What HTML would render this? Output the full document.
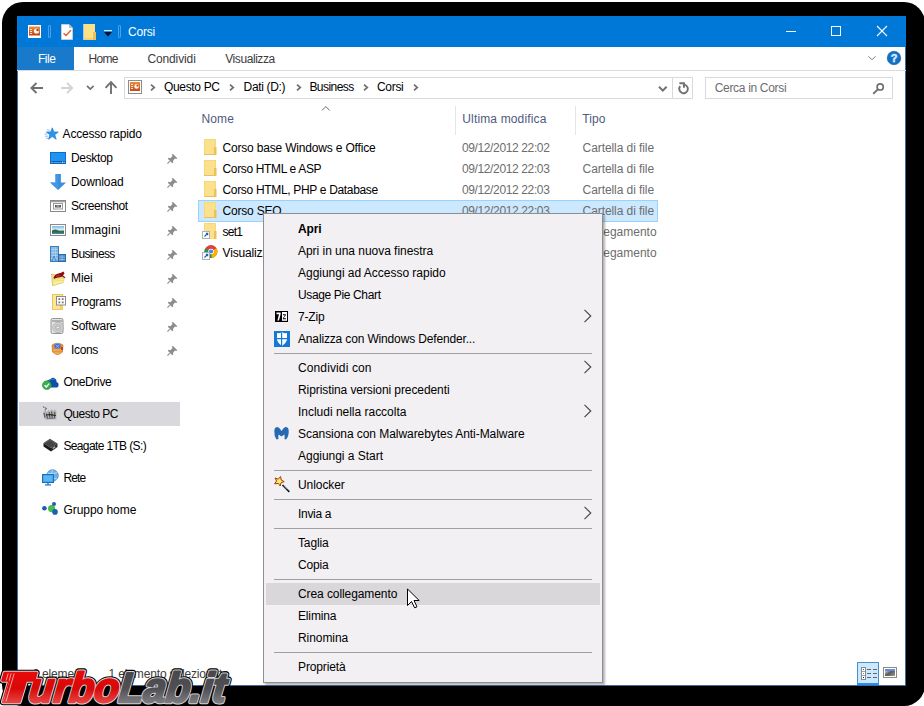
<!DOCTYPE html><html><head><meta charset="utf-8"><style>
html,body{margin:0;padding:0;}
body{width:924px;height:706px;position:relative;overflow:hidden;background:#fff;font-family:"Liberation Sans",sans-serif;}
.t{position:absolute;white-space:pre;}
.r{position:absolute;}
svg.r{overflow:visible}
</style></head><body>
<div class="r" style="left:2px;top:2px;width:923px;height:704px;background:#000;border-radius:21px"></div>
<div class="r" style="left:17px;top:16px;width:889px;height:670px;background:#fff;box-sizing:border-box;border:1px solid #3d6d9d"></div>
<div class="r" style="left:17px;top:16px;width:889px;height:31px;background:#0078d7;"></div>
<svg class="r" style="left:27.5px;top:24.5px" width="13" height="13" viewBox="0 0 13 13"><defs><linearGradient id="og1" x1="0" y1="0" x2="0" y2="1"><stop offset="0" stop-color="#f09040"/><stop offset="1" stop-color="#b8441a"/></linearGradient></defs><rect x="0" y="0" width="13" height="13" fill="#fff"/><rect x="1" y="1.5" width="11" height="9" fill="url(#og1)"/><rect x="2" y="4" width="2" height="1" fill="#fde6c8"/><rect x="2" y="6" width="2" height="1" fill="#fde6c8"/><rect x="2" y="8" width="2" height="1" fill="#fde6c8"/><circle cx="8.5" cy="6" r="2.6" fill="#fff4e0"/><path d="M8.5 6 L8.5 3.8 A2.2 2.2 0 0 1 10.7 6.2 Z" fill="#a0401a"/></svg>
<div class="r" style="left:48px;top:25px;width:3px;height:13px;background:transparent;box-sizing:border-box;border:1px solid #4aa0ec;border-radius:1px"></div>
<div class="r" style="left:118px;top:25px;width:3px;height:13px;background:transparent;box-sizing:border-box;border:1px solid #4aa0ec;border-radius:1px"></div>
<svg class="r" style="left:61px;top:24px" width="12" height="16" viewBox="0 0 12 16"><path d="M0.5 0.5 H8 L11.5 4 V15.5 H0.5 Z" fill="#fff" stroke="#c8ccd4" stroke-width="1"/><path d="M8 0.5 V4 H11.5 Z" fill="#b8bcc4"/><path d="M2.6 9.2 L5 11.6 L10 6.3" fill="none" stroke="#e0602a" stroke-width="1.4"/></svg>
<svg class="r" style="left:83px;top:24px" width="13" height="16" viewBox="0 0 13 16"><rect x="0" y="0" width="12" height="16" fill="#9ccbe9"/><rect x="1" y="0" width="11" height="16" fill="#fbe08a"/><rect x="10" y="8" width="3" height="8" fill="#e9c15c"/><rect x="1" y="14" width="9" height="2" fill="#f3cf6e"/></svg>
<svg class="r" style="left:104px;top:30px" width="8" height="7" viewBox="0 0 8 7"><rect x="0" y="0" width="8" height="1.2" fill="#d8e8f8"/><path d="M0 2 H8 L4 6.5 Z" fill="#0a1030"/></svg>
<div class="r" style="left:786px;top:31px;width:10px;height:1px;background:#fff;"></div>
<div class="r" style="left:831px;top:26px;width:10px;height:10px;background:transparent;box-sizing:border-box;border:1px solid #fff"></div>
<svg class="r" style="left:877px;top:26px" width="10" height="10" viewBox="0 0 10 10"><path d="M0 0 L10 10 M10 0 L0 10" stroke="#fff" stroke-width="1.1"/></svg>
<svg class="r" style="left:868px;top:56px" width="8" height="4" viewBox="0 0 8 4"><path d="M0.3 0.3 L4 3.7 L7.7 0.3" fill="none" stroke="#808080" stroke-width="1"/></svg>
<svg class="r" style="left:887px;top:51px" width="14" height="14" viewBox="0 0 14 14"><circle cx="7" cy="7" r="6.8" fill="#1370c8" stroke="#0d4f90" stroke-width="0.5"/><text x="7" y="11.2" text-anchor="middle" font-family="Liberation Sans" font-weight="bold" font-size="11" fill="#d8ecff" stroke="#d8ecff" stroke-width="0.5">?</text></svg>
<svg class="r" style="left:30px;top:82px" width="14" height="12" viewBox="0 0 14 12"><path d="M6.5 1 L1.4 6 L6.5 11 M1.4 6 H13" fill="none" stroke="#707070" stroke-width="1.9"/></svg>
<svg class="r" style="left:60px;top:82px" width="14" height="12" viewBox="0 0 14 12"><path d="M7 1 L12.1 6 L7 11 M12.1 6 H1" fill="none" stroke="#d4d4d4" stroke-width="1.9"/></svg>
<svg class="r" style="left:86px;top:85px" width="9" height="5" viewBox="0 0 9 5"><path d="M1 0.8 L4.3 4 L7.6 0.8" fill="none" stroke="#707070" stroke-width="1.7"/></svg>
<svg class="r" style="left:104px;top:81px" width="14" height="13" viewBox="0 0 14 13"><path d="M1.5 6.8 L7 1.2 L12.5 6.8 M7 1.2 V13" fill="none" stroke="#707070" stroke-width="1.9"/></svg>
<svg class="r" style="left:128px;top:80px" width="14" height="14" viewBox="0 0 14 14"><rect x="0.5" y="0.5" width="13" height="13" fill="#fff" stroke="#8c8c8c" stroke-width="1"/><defs><linearGradient id="og2" x1="0" y1="0" x2="0" y2="1"><stop offset="0" stop-color="#f08a3c"/><stop offset="1" stop-color="#c04a18"/></linearGradient></defs><rect x="2" y="2" width="10" height="9" fill="url(#og2)"/><rect x="3" y="4" width="2" height="1" fill="#fde6c8"/><rect x="3" y="6" width="2" height="1" fill="#fde6c8"/><rect x="3" y="8" width="2" height="1" fill="#fde6c8"/><circle cx="8.6" cy="6.4" r="2.3" fill="#fff4e0"/><path d="M8.6 6.4 L8.6 4.4 A2 2 0 0 1 10.5 6.6 Z" fill="#a0401a"/></svg>
<svg class="r" style="left:150px;top:84px" width="6" height="7" viewBox="0 0 6 7"><path d="M1 0.7 L4.3 3.5 L1 6.3" fill="none" stroke="#707070" stroke-width="1.7"/></svg>
<svg class="r" style="left:229px;top:84px" width="6" height="7" viewBox="0 0 6 7"><path d="M1 0.7 L4.3 3.5 L1 6.3" fill="none" stroke="#707070" stroke-width="1.7"/></svg>
<svg class="r" style="left:295.5px;top:84px" width="6" height="7" viewBox="0 0 6 7"><path d="M1 0.7 L4.3 3.5 L1 6.3" fill="none" stroke="#707070" stroke-width="1.7"/></svg>
<svg class="r" style="left:363px;top:84px" width="6" height="7" viewBox="0 0 6 7"><path d="M1 0.7 L4.3 3.5 L1 6.3" fill="none" stroke="#707070" stroke-width="1.7"/></svg>
<svg class="r" style="left:413px;top:84px" width="6" height="7" viewBox="0 0 6 7"><path d="M1 0.7 L4.3 3.5 L1 6.3" fill="none" stroke="#707070" stroke-width="1.7"/></svg>
<svg class="r" style="left:658px;top:86px" width="10" height="6" viewBox="0 0 10 6"><path d="M1 0.8 L4.8 4.6 L8.6 0.8" fill="none" stroke="#707070" stroke-width="2"/></svg>
<svg class="r" style="left:677px;top:82px" width="12" height="12" viewBox="0 0 12 12"><path d="M3.2 4.2 A4.3 4.3 0 1 0 6.6 2.6" fill="none" stroke="#707070" stroke-width="1.9"/><path d="M2.4 1.3 H6.9 V5.8" fill="none" stroke="#707070" stroke-width="1.9"/></svg>
<svg class="r" style="left:872px;top:82px" width="13" height="13" viewBox="0 0 13 13"><circle cx="8.2" cy="4.9" r="3.1" fill="none" stroke="#707070" stroke-width="1.7"/><path d="M5.8 7.4 L1.3 11.8" stroke="#707070" stroke-width="1.9"/></svg>
<svg class="r" style="left:321px;top:105px" width="10" height="7" viewBox="0 0 10 7"><path d="M1 5.5 L4.8 1.5 L8.6 5.5" fill="none" stroke="#707070" stroke-width="1"/></svg>
<div class="r" style="left:17px;top:47px;width:57px;height:23px;background:#1979ca;"></div>
<div class="t" style="left:38.00px;top:53.00px;font-size:12px;line-height:12px;color:#fff;font-weight:normal;letter-spacing:-0.509px">File</div>
<div class="t" style="left:88.60px;top:53.00px;font-size:12px;line-height:12px;color:#3c3c3c;font-weight:normal;letter-spacing:-0.753px">Home</div>
<div class="t" style="left:147.40px;top:53.00px;font-size:12px;line-height:12px;color:#3c3c3c;font-weight:normal;letter-spacing:-0.118px">Condividi</div>
<div class="t" style="left:225.20px;top:53.00px;font-size:12px;line-height:12px;color:#3c3c3c;font-weight:normal;letter-spacing:-0.421px">Visualizza</div>
<div class="r" style="left:17px;top:70px;width:889px;height:1px;background:#dadbdc;"></div>
<div class="t" style="left:128.00px;top:26.00px;font-size:12px;line-height:12px;color:#fff;font-weight:normal;letter-spacing:-0.201px">Corsi</div>
<div class="r" style="left:124px;top:77px;width:569px;height:22px;background:transparent;box-sizing:border-box;border:1px solid #d9d9d9"></div>
<div class="r" style="left:672px;top:78px;width:1px;height:20px;background:#d9d9d9;"></div>
<div class="t" style="left:164.00px;top:81.00px;font-size:12px;line-height:12px;color:#000;font-weight:normal;letter-spacing:-0.333px">Questo PC</div>
<div class="t" style="left:243.60px;top:81.00px;font-size:12px;line-height:12px;color:#000;font-weight:normal;letter-spacing:-0.330px">Dati (D:)</div>
<div class="t" style="left:309.40px;top:81.00px;font-size:12px;line-height:12px;color:#000;font-weight:normal;letter-spacing:-0.537px">Business</div>
<div class="t" style="left:376.90px;top:81.00px;font-size:12px;line-height:12px;color:#000;font-weight:normal;letter-spacing:-0.281px">Corsi</div>
<div class="r" style="left:705px;top:77px;width:188px;height:22px;background:transparent;box-sizing:border-box;border:1px solid #d9d9d9"></div>
<div class="t" style="left:714.70px;top:82.00px;font-size:12px;line-height:12px;color:#6d6d6d;font-weight:normal;letter-spacing:-0.316px">Cerca in Corsi</div>
<div class="t" style="left:201.40px;top:113.00px;font-size:12px;line-height:12px;color:#4f5a7e;font-weight:normal;letter-spacing:0.197px">Nome</div>
<div class="r" style="left:455px;top:106px;width:1px;height:29px;background:#e5e5e5;"></div>
<div class="t" style="left:462.30px;top:113.00px;font-size:12px;line-height:12px;color:#4f5a7e;font-weight:normal;letter-spacing:0.145px">Ultima modifica</div>
<div class="r" style="left:575px;top:106px;width:1px;height:29px;background:#e5e5e5;"></div>
<div class="t" style="left:582.20px;top:113.00px;font-size:12px;line-height:12px;color:#4f5a7e;font-weight:normal;letter-spacing:0.125px">Tipo</div>
<div class="r" style="left:198px;top:200px;width:460px;height:22px;background:#cce8ff;box-sizing:border-box;border:1px solid #99d1ff"></div>
<div class="t" style="left:222.50px;top:142.00px;font-size:12px;line-height:12px;color:#000;font-weight:normal;letter-spacing:-0.180px">Corso base Windows e Office</div>
<div class="t" style="left:461.90px;top:142.00px;font-size:12px;line-height:12px;color:#6d6d6d;font-weight:normal;letter-spacing:-0.364px">09/12/2012 22:02</div>
<div class="t" style="left:582.60px;top:142.00px;font-size:12px;line-height:12px;color:#6d6d6d;font-weight:normal;letter-spacing:-0.081px">Cartella di file</div>
<div class="t" style="left:222.50px;top:163.00px;font-size:12px;line-height:12px;color:#000;font-weight:normal;letter-spacing:-0.347px">Corso HTML e ASP</div>
<div class="t" style="left:461.90px;top:163.00px;font-size:12px;line-height:12px;color:#6d6d6d;font-weight:normal;letter-spacing:-0.364px">09/12/2012 22:03</div>
<div class="t" style="left:582.60px;top:163.00px;font-size:12px;line-height:12px;color:#6d6d6d;font-weight:normal;letter-spacing:-0.081px">Cartella di file</div>
<div class="t" style="left:222.50px;top:184.00px;font-size:12px;line-height:12px;color:#000;font-weight:normal;letter-spacing:-0.325px">Corso HTML, PHP e Database</div>
<div class="t" style="left:461.90px;top:184.00px;font-size:12px;line-height:12px;color:#6d6d6d;font-weight:normal;letter-spacing:-0.364px">09/12/2012 22:03</div>
<div class="t" style="left:582.60px;top:184.00px;font-size:12px;line-height:12px;color:#6d6d6d;font-weight:normal;letter-spacing:-0.081px">Cartella di file</div>
<div class="t" style="left:222.50px;top:205.00px;font-size:12px;line-height:12px;color:#000;font-weight:normal;letter-spacing:-0.202px">Corso SEO</div>
<div class="t" style="left:461.90px;top:205.00px;font-size:12px;line-height:12px;color:#6d6d6d;font-weight:normal;letter-spacing:-0.364px">09/12/2012 22:03</div>
<div class="t" style="left:582.60px;top:205.00px;font-size:12px;line-height:12px;color:#6d6d6d;font-weight:normal;letter-spacing:-0.081px">Cartella di file</div>
<div class="t" style="left:222.50px;top:226.00px;font-size:12px;line-height:12px;color:#000;font-weight:normal;letter-spacing:-0.745px">set1</div>
<div class="t" style="left:582.60px;top:226.00px;font-size:12px;line-height:12px;color:#6d6d6d;font-weight:normal;letter-spacing:-0.004px">Collegamento</div>
<div class="t" style="left:222.50px;top:247.00px;font-size:12px;line-height:12px;color:#000;font-weight:normal;letter-spacing:-0.162px">Visualizza collegamenti</div>
<div class="t" style="left:582.60px;top:247.00px;font-size:12px;line-height:12px;color:#6d6d6d;font-weight:normal;letter-spacing:-0.004px">Collegamento</div>
<div class="r" style="left:19px;top:402px;width:161px;height:24px;background:#d9d8dd;"></div>
<div class="t" style="left:62.60px;top:128.00px;font-size:12px;line-height:12px;color:#000;font-weight:normal;letter-spacing:-0.218px">Accesso rapido</div>
<div class="t" style="left:71.00px;top:152.00px;font-size:12px;line-height:12px;color:#000;font-weight:normal;letter-spacing:-0.346px">Desktop</div>
<div class="t" style="left:71.00px;top:176.00px;font-size:12px;line-height:12px;color:#000;font-weight:normal;letter-spacing:-0.096px">Download</div>
<div class="t" style="left:71.00px;top:200.00px;font-size:12px;line-height:12px;color:#000;font-weight:normal;letter-spacing:-0.410px">Screenshot</div>
<div class="t" style="left:71.00px;top:224.00px;font-size:12px;line-height:12px;color:#000;font-weight:normal;letter-spacing:0.090px">Immagini</div>
<div class="t" style="left:71.00px;top:248.00px;font-size:12px;line-height:12px;color:#000;font-weight:normal;letter-spacing:-0.624px">Business</div>
<div class="t" style="left:71.00px;top:272.00px;font-size:12px;line-height:12px;color:#000;font-weight:normal;letter-spacing:-0.101px">Miei</div>
<div class="t" style="left:71.00px;top:296.00px;font-size:12px;line-height:12px;color:#000;font-weight:normal;letter-spacing:-0.265px">Programs</div>
<div class="t" style="left:71.00px;top:320.00px;font-size:12px;line-height:12px;color:#000;font-weight:normal;letter-spacing:-0.295px">Software</div>
<div class="t" style="left:71.00px;top:344.00px;font-size:12px;line-height:12px;color:#000;font-weight:normal;letter-spacing:-0.336px">Icons</div>
<div class="t" style="left:63.40px;top:376.00px;font-size:12px;line-height:12px;color:#000;font-weight:normal;letter-spacing:-0.336px">OneDrive</div>
<div class="t" style="left:63.40px;top:408.00px;font-size:12px;line-height:12px;color:#000;font-weight:normal;letter-spacing:-0.455px">Questo PC</div>
<div class="t" style="left:63.40px;top:440.00px;font-size:12px;line-height:12px;color:#000;font-weight:normal;letter-spacing:-0.632px">Seagate 1TB (S:)</div>
<div class="t" style="left:63.40px;top:472.00px;font-size:12px;line-height:12px;color:#000;font-weight:normal;letter-spacing:-0.862px">Rete</div>
<div class="t" style="left:63.40px;top:504.00px;font-size:12px;line-height:12px;color:#000;font-weight:normal;letter-spacing:-0.044px">Gruppo home</div>
<div class="t" style="left:32.40px;top:668.00px;font-size:12px;line-height:12px;color:#3c3c3c;font-weight:normal;letter-spacing:-0.166px">6 elementi</div>
<div class="t" style="left:108.60px;top:668.00px;font-size:12px;line-height:12px;color:#3c3c3c;font-weight:normal;letter-spacing:-0.155px">1 elemento selezionato</div>
<svg class="r" style="left:44px;top:127px" width="15" height="14" viewBox="0 0 15 14"><path d="M8.3 0.8 L9.9 4.9 L14.3 5.0 L10.8 7.7 L12.2 12.3 L8.3 9.6 L4.5 12.3 L5.8 7.7 L2.3 5.0 L6.7 4.9 Z" fill="#2f94e6" stroke="#1a74c8" stroke-width="0.6"/><path d="M0.5 7 H3.2 M1 9.2 H4 M2 11.3 H4.5 M3 2.8 L5.5 3.3" stroke="#7ab8ee" stroke-width="0.9"/></svg>
<svg class="r" style="left:50px;top:152px" width="16" height="12" viewBox="0 0 16 12"><rect x="0.5" y="0.5" width="15" height="11" fill="#1f95ef" stroke="#0c6fcf"/><rect x="1" y="9" width="14" height="2.5" fill="#0a5fb0"/><rect x="1.5" y="9.8" width="1" height="1" fill="#fff"/><rect x="12" y="9.8" width="1" height="1" fill="#fff"/><rect x="13.6" y="9.8" width="1" height="1" fill="#fff"/><rect x="3.5" y="10" width="8" height="0.6" fill="#8cc4f0"/></svg>
<svg class="r" style="left:50px;top:174px" width="16" height="16" viewBox="0 0 16 16"><path d="M5.4 0 H10.9 V8.6 H16 L8.15 16 L0 8.6 H5.4 Z" fill="#3b8fe0"/><path d="M5.4 0 H8.15 V16 L0 8.6 H5.4 Z" fill="#4a9be6" opacity="0.6"/></svg>
<svg class="r" style="left:50px;top:200px" width="16" height="12" viewBox="0 0 16 12"><rect x="0.5" y="0.5" width="15" height="11" fill="#fff" stroke="#8a8a8a"/><rect x="1" y="1" width="14" height="1.3" fill="#a0a0a0"/><rect x="3.5" y="3.5" width="9" height="5.5" fill="#fff" stroke="#9a9a9a"/><rect x="5" y="5" width="6" height="2.5" fill="#5a5a5a"/><rect x="6.5" y="5.5" width="3" height="1" fill="#c8c8c8"/></svg>
<svg class="r" style="left:50px;top:224px" width="16" height="12" viewBox="0 0 16 12"><defs><linearGradient id="sky" x1="0" y1="0" x2="0" y2="1"><stop offset="0" stop-color="#7ab8e8"/><stop offset="0.45" stop-color="#d8ecf8"/><stop offset="0.7" stop-color="#3e7a50"/><stop offset="1" stop-color="#4a86b8"/></linearGradient></defs><rect x="0.5" y="0.5" width="15" height="11" fill="#fff" stroke="#8a8a8a"/><rect x="2" y="2" width="12" height="8" fill="url(#sky)"/><path d="M2 7 Q5 4.5 8 6.5 T14 6.8 V8.5 H2 Z" fill="#2e6a48"/></svg>
<svg class="r" style="left:50px;top:246px" width="16" height="16" viewBox="0 0 16 16"><rect x="0.5" y="0.5" width="8" height="15" fill="#7db4e2" stroke="#3a7ec0"/><path d="M1 3.5 H8 M1 6.5 H8 M1 9.5 H8 M1 12.5 H8 M3 1 V15 M5.5 1 V15" stroke="#b8daf4" stroke-width="0.6"/><rect x="8.5" y="8.5" width="7" height="7" fill="#4d8ac8" stroke="#2e6aa8"/><path d="M9 11 H15 M9 13.5 H15 M12 9 V15" stroke="#a8d0f0" stroke-width="0.6"/><path d="M2 15 L4 10 L6 15" fill="none" stroke="#3c78b0" stroke-width="0.8"/></svg>
<svg class="r" style="left:51px;top:271px" width="16" height="16" viewBox="0 0 16 16"><path d="M0.5 3 L1.5 14.5 L12 11.5 L12.5 6 Z" fill="#f2e488" stroke="#b8a860" stroke-width="0.6"/><path d="M2 8.5 L13.5 7 L12 11.8 L1.5 14.5 Z" fill="#f8ee9a" stroke="#d8c860" stroke-width="0.5"/><path d="M3.5 10 Q8 9 12 9.5" stroke="#e8e070" stroke-width="0.8" fill="none"/><path d="M2.5 6.5 Q4 3 7.5 2.5 Q10 2.2 12.5 0.5 L13.5 2.5 Q12.5 3.5 12 4.5 L14.5 6.2 L13.5 7 L11.5 5.5 Q9 6.5 6 6.8 Q4 7 3.2 8 Z" fill="#8e0c0c"/><path d="M5 5.5 Q7 4.5 9 4.6" stroke="#e06060" stroke-width="0.6" fill="none"/></svg>
<svg class="r" style="left:52px;top:294px" width="14" height="16" viewBox="0 0 14 16"><rect x="0.5" y="0.5" width="10" height="15" fill="#fbe49c" stroke="#f0c850"/><rect x="8" y="8" width="3" height="7.5" fill="#f2cf62"/><rect x="4.5" y="2.5" width="9" height="8.5" fill="#fff" stroke="#8c8c8c"/><rect x="6.4" y="4.2" width="1.8" height="1.8" fill="#7a7a7a"/><rect x="9.8" y="4.2" width="1.8" height="1.8" fill="#7a7a7a"/><rect x="6.4" y="7.5" width="1.8" height="1.8" fill="#7a7a7a"/><rect x="9.8" y="7.5" width="1.8" height="1.8" fill="#7a7a7a"/></svg>
<svg class="r" style="left:50px;top:318px" width="16" height="16" viewBox="0 0 16 16"><defs><radialGradient id="disc" cx="0.5" cy="0.5" r="0.5"><stop offset="0" stop-color="#fff"/><stop offset="0.5" stop-color="#b8b8b8"/><stop offset="1" stop-color="#e8e8e8"/></radialGradient></defs><path d="M1 2 Q1 0.5 2.5 0.5 H11.5 Q13 0.5 13 2 V14 Q13 15.5 11.5 15.5 H2.5 Q1 15.5 1 14 Z" fill="#e4e4e4" stroke="#8a8a8a" stroke-width="0.9"/><rect x="2" y="2" width="10" height="2" fill="#b0b0b0"/><circle cx="8" cy="9.5" r="5.2" fill="url(#disc)" stroke="#9a9a9a" stroke-width="0.7"/><circle cx="8" cy="9.5" r="1.2" fill="#fff" stroke="#888" stroke-width="0.5"/></svg>
<svg class="r" style="left:51px;top:342px" width="13" height="14" viewBox="0 0 13 14"><path d="M1 3 Q6.5 -0.5 12 3 L11.5 10 Q6.5 15 1.5 10 Z" fill="#e8943a" stroke="#b86820" stroke-width="0.6"/><path d="M3.5 1.8 H9.5 V6.5 H3.5 Z" fill="#3a6cd8"/><path d="M4.5 2.5 L8.5 6 M8.5 2.5 L4.5 6" stroke="#a8c8f8" stroke-width="0.7"/><path d="M2 8 H11 M3 11 H10" stroke="#f6c07a" stroke-width="0.8"/><rect x="10" y="5" width="2" height="3" fill="#c84020"/></svg>
<svg class="r" style="left:42px;top:376px" width="17" height="14" viewBox="0 0 17 14"><path d="M4 8 Q4.5 3.5 8.5 3.2 Q10.5 0.8 13 2.5 Q15 3.5 14.5 6 Q17 6.8 16.5 9.5 Q16.5 11 15 11.5 H5 Z" fill="#0d52a8"/><path d="M7 4.8 Q9.8 2.2 12.5 3.8" fill="none" stroke="#2a78d0" stroke-width="1.1"/><circle cx="4.8" cy="9.2" r="4.4" fill="#3bb04a" stroke="#2a9038" stroke-width="0.6"/><path d="M2.6 9.2 L4.3 11 L7.2 7.6" fill="none" stroke="#fff" stroke-width="1.3"/></svg>
<svg class="r" style="left:42px;top:404px" width="16" height="17" viewBox="0 0 16 17"><path d="M1.3 2.6 L2.3 3.6 M3.4 3.6 L4.6 5 M3 5.4 L3.6 6.4" stroke="#505050" stroke-width="1.1"/><path d="M1 8 L3 6.5 L5 8 L6.6 5.5 L8 7.5 L9.5 5 L11.5 7 L12.5 5.3 L14.5 7 L14.3 15.2 L4 15.8 L2 14 Z" fill="#b4b4b4"/><path d="M2 9 L3 13.5 M4.3 9.5 Q5 13 5.8 15 M7.2 8 L8 14.8 M9.6 7.5 L10.3 14.5 M12.8 8 L12.6 14" stroke="#505050" stroke-width="1.1"/><path d="M4 11 Q8 9.8 14 11.5" stroke="#2e2e2e" stroke-width="1"/><path d="M5 14.5 H13" stroke="#7a7a7a" stroke-width="0.8"/></svg>
<svg class="r" style="left:43px;top:438px" width="15" height="14" viewBox="0 0 15 14"><path d="M0.5 5 L7 0.8 L14.5 5.5 L8 10 Z" fill="#444"/><path d="M0.5 5 L8 10 V13.5 L0.5 8.5 Z" fill="#1a1a1a"/><path d="M8 10 L14.5 5.5 V9 L8 13.5 Z" fill="#2a2a2a"/><path d="M1.5 5 L7 1.8 L13 5.5" fill="none" stroke="#777" stroke-width="0.5"/><rect x="9.5" y="9" width="3" height="1.2" fill="#bbb" transform="rotate(-34 11 9.6)"/></svg>
<svg class="r" style="left:42px;top:469px" width="17" height="17" viewBox="0 0 17 17"><circle cx="10.5" cy="6.5" r="5.8" fill="#6fb0e8" stroke="#3d7fc0" stroke-width="0.7"/><path d="M5.5 4 Q10 6 15.5 3.5 M6 9 Q10 8 15 10 M10.5 0.8 Q8 6 10.5 12.3" fill="none" stroke="#c8e4f8" stroke-width="0.8"/><rect x="0.5" y="5.5" width="11" height="8" fill="#2e9ae6" stroke="#1c6fbe"/><rect x="1.5" y="6.5" width="9" height="6" fill="#5cb6f2"/><rect x="5.3" y="13.5" width="1.4" height="2" fill="#1c6fbe"/><rect x="3" y="15.3" width="6" height="1.2" fill="#1c6fbe"/></svg>
<svg class="r" style="left:42px;top:502px" width="17" height="14" viewBox="0 0 17 14"><circle cx="2.4" cy="6.3" r="2.3" fill="#1a5fb0"/><circle cx="9.6" cy="6.6" r="3.6" fill="#4cbc4c"/><circle cx="12" cy="2" r="2" fill="#1a5fb0"/><circle cx="13" cy="9.9" r="2.8" fill="#1a5fb0"/></svg>
<svg class="r" style="left:166.5px;top:152.5px" width="11" height="11" viewBox="0 0 10 10"><path d="M5.2 0.6 L9.4 4.8 L8.4 5.5 L7.2 5 L5.4 7.2 L5.7 8.7 L4.8 9.4 L0.7 5.3 L1.4 4.4 L2.9 4.7 L5 2.9 L4.5 1.6 Z" fill="#8c8c8c"/><path d="M2.6 7.4 L0.4 9.6" stroke="#8c8c8c" stroke-width="1"/></svg>
<svg class="r" style="left:166.5px;top:176.5px" width="11" height="11" viewBox="0 0 10 10"><path d="M5.2 0.6 L9.4 4.8 L8.4 5.5 L7.2 5 L5.4 7.2 L5.7 8.7 L4.8 9.4 L0.7 5.3 L1.4 4.4 L2.9 4.7 L5 2.9 L4.5 1.6 Z" fill="#8c8c8c"/><path d="M2.6 7.4 L0.4 9.6" stroke="#8c8c8c" stroke-width="1"/></svg>
<svg class="r" style="left:166.5px;top:200.5px" width="11" height="11" viewBox="0 0 10 10"><path d="M5.2 0.6 L9.4 4.8 L8.4 5.5 L7.2 5 L5.4 7.2 L5.7 8.7 L4.8 9.4 L0.7 5.3 L1.4 4.4 L2.9 4.7 L5 2.9 L4.5 1.6 Z" fill="#8c8c8c"/><path d="M2.6 7.4 L0.4 9.6" stroke="#8c8c8c" stroke-width="1"/></svg>
<svg class="r" style="left:166.5px;top:224.5px" width="11" height="11" viewBox="0 0 10 10"><path d="M5.2 0.6 L9.4 4.8 L8.4 5.5 L7.2 5 L5.4 7.2 L5.7 8.7 L4.8 9.4 L0.7 5.3 L1.4 4.4 L2.9 4.7 L5 2.9 L4.5 1.6 Z" fill="#8c8c8c"/><path d="M2.6 7.4 L0.4 9.6" stroke="#8c8c8c" stroke-width="1"/></svg>
<svg class="r" style="left:166.5px;top:248.5px" width="11" height="11" viewBox="0 0 10 10"><path d="M5.2 0.6 L9.4 4.8 L8.4 5.5 L7.2 5 L5.4 7.2 L5.7 8.7 L4.8 9.4 L0.7 5.3 L1.4 4.4 L2.9 4.7 L5 2.9 L4.5 1.6 Z" fill="#8c8c8c"/><path d="M2.6 7.4 L0.4 9.6" stroke="#8c8c8c" stroke-width="1"/></svg>
<svg class="r" style="left:166.5px;top:272.5px" width="11" height="11" viewBox="0 0 10 10"><path d="M5.2 0.6 L9.4 4.8 L8.4 5.5 L7.2 5 L5.4 7.2 L5.7 8.7 L4.8 9.4 L0.7 5.3 L1.4 4.4 L2.9 4.7 L5 2.9 L4.5 1.6 Z" fill="#8c8c8c"/><path d="M2.6 7.4 L0.4 9.6" stroke="#8c8c8c" stroke-width="1"/></svg>
<svg class="r" style="left:166.5px;top:296.5px" width="11" height="11" viewBox="0 0 10 10"><path d="M5.2 0.6 L9.4 4.8 L8.4 5.5 L7.2 5 L5.4 7.2 L5.7 8.7 L4.8 9.4 L0.7 5.3 L1.4 4.4 L2.9 4.7 L5 2.9 L4.5 1.6 Z" fill="#8c8c8c"/><path d="M2.6 7.4 L0.4 9.6" stroke="#8c8c8c" stroke-width="1"/></svg>
<svg class="r" style="left:166.5px;top:320.5px" width="11" height="11" viewBox="0 0 10 10"><path d="M5.2 0.6 L9.4 4.8 L8.4 5.5 L7.2 5 L5.4 7.2 L5.7 8.7 L4.8 9.4 L0.7 5.3 L1.4 4.4 L2.9 4.7 L5 2.9 L4.5 1.6 Z" fill="#8c8c8c"/><path d="M2.6 7.4 L0.4 9.6" stroke="#8c8c8c" stroke-width="1"/></svg>
<svg class="r" style="left:166.5px;top:344.5px" width="11" height="11" viewBox="0 0 10 10"><path d="M5.2 0.6 L9.4 4.8 L8.4 5.5 L7.2 5 L5.4 7.2 L5.7 8.7 L4.8 9.4 L0.7 5.3 L1.4 4.4 L2.9 4.7 L5 2.9 L4.5 1.6 Z" fill="#8c8c8c"/><path d="M2.6 7.4 L0.4 9.6" stroke="#8c8c8c" stroke-width="1"/></svg>
<svg class="r" style="left:204px;top:139px" width="13" height="16" viewBox="0 0 13 16"><rect x="0" y="0" width="12" height="16" fill="#f8d775"/><rect x="1" y="1" width="10" height="14" fill="#fbe08e"/><rect x="10" y="8" width="2.5" height="8" fill="#eec05a"/><rect x="0" y="15" width="12" height="1" fill="#e8c060"/></svg>
<svg class="r" style="left:204px;top:160px" width="13" height="16" viewBox="0 0 13 16"><rect x="0" y="0" width="12" height="16" fill="#f8d775"/><rect x="1" y="1" width="10" height="14" fill="#fbe08e"/><rect x="10" y="8" width="2.5" height="8" fill="#eec05a"/><rect x="0" y="15" width="12" height="1" fill="#e8c060"/></svg>
<svg class="r" style="left:204px;top:181px" width="13" height="16" viewBox="0 0 13 16"><rect x="0" y="0" width="12" height="16" fill="#f8d775"/><rect x="1" y="1" width="10" height="14" fill="#fbe08e"/><rect x="10" y="8" width="2.5" height="8" fill="#eec05a"/><rect x="0" y="15" width="12" height="1" fill="#e8c060"/></svg>
<svg class="r" style="left:204px;top:202px" width="13" height="16" viewBox="0 0 13 16"><rect x="0" y="0" width="12" height="16" fill="#f8d775"/><rect x="1" y="1" width="10" height="14" fill="#fbe08e"/><rect x="10" y="8" width="2.5" height="8" fill="#eec05a"/><rect x="0" y="15" width="12" height="1" fill="#e8c060"/></svg>
<svg class="r" style="left:202px;top:223px" width="16" height="17" viewBox="0 0 16 17"><rect x="2" y="0" width="12" height="16" fill="#f8d775"/><rect x="3" y="1" width="10" height="14" fill="#fbe08e"/><rect x="12" y="8" width="2.5" height="8" fill="#eec05a"/><rect x="0.5" y="8.5" width="7" height="7" fill="#fff" stroke="#b0b0b0"/><path d="M2.5 13.5 L5.5 10.5 M3.8 10.3 H5.7 V12.2" fill="none" stroke="#1a5fb4" stroke-width="1.1"/></svg>
<svg class="r" style="left:202px;top:244px" width="16" height="17" viewBox="0 0 16 17"><circle cx="9" cy="7.5" r="6.5" fill="#db4437"/><path d="M9 7.5 L14.6 4.3 A6.5 6.5 0 0 1 9.5 14 Z" fill="#f4b400"/><path d="M9 7.5 L9.5 14 A6.5 6.5 0 0 1 3.2 4.5 Z" fill="#0f9d58"/><circle cx="9" cy="7.5" r="2.8" fill="#fff"/><circle cx="9" cy="7.5" r="2.1" fill="#4285f4"/><rect x="0.5" y="8.5" width="7" height="7" fill="#fff" stroke="#b0b0b0"/><path d="M2.5 13.5 L5.5 10.5 M3.8 10.3 H5.7 V12.2" fill="none" stroke="#1a5fb4" stroke-width="1.1"/></svg>
<div class="r" style="left:857px;top:662px;width:22px;height:23px;background:#cce8ff;box-sizing:border-box;border:1px solid #4a90c8;border-bottom:2px solid #2a8ef0"></div>
<svg class="r" style="left:861px;top:667px" width="17" height="13" viewBox="0 0 17 13"><rect x="0.5" y="0.5" width="4" height="12" fill="#fff" stroke="#8a8a8a"/><path d="M1 4.5 H4 M1 8.5 H4" stroke="#8a8a8a" stroke-width="0.8"/><rect x="2" y="2" width="1" height="1" fill="#555"/><rect x="2" y="6" width="1" height="1" fill="#888"/><rect x="2" y="10" width="1" height="1" fill="#222"/><path d="M6 2.5 H10 M12 2.5 H16 M6 6.5 H10 M12 6.5 H16 M6 10.5 H10 M12 10.5 H16" stroke="#5a6870" stroke-width="1"/></svg>
<svg class="r" style="left:883px;top:667px" width="14" height="11" viewBox="0 0 14 11"><defs><linearGradient id="lg9" x1="0" y1="0" x2="1" y2="1"><stop offset="0" stop-color="#fff"/><stop offset="0.5" stop-color="#5a5a5a"/><stop offset="1" stop-color="#9a9a9a"/></linearGradient></defs><rect x="0.5" y="0.5" width="13" height="10" fill="#fff" stroke="#8a8a8a"/><rect x="2" y="2" width="10" height="7" fill="url(#lg9)"/><rect x="2" y="2" width="10" height="2" fill="#6a8ad8"/></svg>
<div class="r" style="left:263px;top:213px;width:340px;height:470px;background:#f2f0f3;box-sizing:border-box;border:1px solid #8e8e90;box-shadow:2px 2px 2px rgba(0,0,0,0.3)"></div>
<div class="r" style="left:266px;top:583px;width:334px;height:22px;background:#d9d7da;"></div>
<div class="t" style="left:298.00px;top:223.00px;font-size:12px;line-height:12px;color:#000;font-weight:bold;letter-spacing:-0.180px">Apri</div>
<div class="t" style="left:298.00px;top:245.00px;font-size:12px;line-height:12px;color:#000;font-weight:normal;letter-spacing:-0.034px">Apri in una nuova finestra</div>
<div class="t" style="left:298.00px;top:267.00px;font-size:12px;line-height:12px;color:#000;font-weight:normal;letter-spacing:-0.019px">Aggiungi ad Accesso rapido</div>
<div class="t" style="left:298.00px;top:289.00px;font-size:12px;line-height:12px;color:#000;font-weight:normal;letter-spacing:-0.363px">Usage Pie Chart</div>
<div class="t" style="left:298.00px;top:311.00px;font-size:12px;line-height:12px;color:#000;font-weight:normal;letter-spacing:-0.164px">7-Zip</div>
<svg class="r" style="left:583px;top:309px" width="10" height="14" viewBox="0 0 10 14"><path d="M1.5 0.8 L7.8 7 L1.5 13.2" fill="none" stroke="#444" stroke-width="1.1"/></svg>
<div class="t" style="left:298.00px;top:333.00px;font-size:12px;line-height:12px;color:#000;font-weight:normal;letter-spacing:-0.153px">Analizza con Windows Defender...</div>
<div class="t" style="left:298.00px;top:362.00px;font-size:12px;line-height:12px;color:#000;font-weight:normal;letter-spacing:0.120px">Condividi con</div>
<svg class="r" style="left:583px;top:360px" width="10" height="14" viewBox="0 0 10 14"><path d="M1.5 0.8 L7.8 7 L1.5 13.2" fill="none" stroke="#444" stroke-width="1.1"/></svg>
<div class="t" style="left:298.00px;top:384.00px;font-size:12px;line-height:12px;color:#000;font-weight:normal;letter-spacing:-0.086px">Ripristina versioni precedenti</div>
<div class="t" style="left:298.00px;top:406.00px;font-size:12px;line-height:12px;color:#000;font-weight:normal;letter-spacing:-0.015px">Includi nella raccolta</div>
<svg class="r" style="left:583px;top:404px" width="10" height="14" viewBox="0 0 10 14"><path d="M1.5 0.8 L7.8 7 L1.5 13.2" fill="none" stroke="#444" stroke-width="1.1"/></svg>
<div class="t" style="left:298.00px;top:428.00px;font-size:12px;line-height:12px;color:#000;font-weight:normal;letter-spacing:-0.056px">Scansiona con Malwarebytes Anti-Malware</div>
<div class="t" style="left:298.00px;top:450.00px;font-size:12px;line-height:12px;color:#000;font-weight:normal;letter-spacing:-0.024px">Aggiungi a Start</div>
<div class="t" style="left:298.00px;top:479.00px;font-size:12px;line-height:12px;color:#000;font-weight:normal;letter-spacing:-0.069px">Unlocker</div>
<div class="t" style="left:298.00px;top:508.00px;font-size:12px;line-height:12px;color:#000;font-weight:normal;letter-spacing:-0.308px">Invia a</div>
<svg class="r" style="left:583px;top:506px" width="10" height="14" viewBox="0 0 10 14"><path d="M1.5 0.8 L7.8 7 L1.5 13.2" fill="none" stroke="#444" stroke-width="1.1"/></svg>
<div class="t" style="left:298.00px;top:537.00px;font-size:12px;line-height:12px;color:#000;font-weight:normal;letter-spacing:-0.126px">Taglia</div>
<div class="t" style="left:298.00px;top:559.00px;font-size:12px;line-height:12px;color:#000;font-weight:normal;letter-spacing:-0.151px">Copia</div>
<div class="t" style="left:298.00px;top:588.00px;font-size:12px;line-height:12px;color:#000;font-weight:normal;letter-spacing:-0.084px">Crea collegamento</div>
<div class="t" style="left:298.00px;top:610.00px;font-size:12px;line-height:12px;color:#000;font-weight:normal;letter-spacing:-0.150px">Elimina</div>
<div class="t" style="left:298.00px;top:632.00px;font-size:12px;line-height:12px;color:#000;font-weight:normal;letter-spacing:-0.061px">Rinomina</div>
<div class="t" style="left:298.00px;top:661.00px;font-size:12px;line-height:12px;color:#000;font-weight:normal;letter-spacing:-0.122px">Proprietà</div>
<div class="r" style="left:274px;top:353px;width:318px;height:1px;background:#a0a0a0;"></div>
<div class="r" style="left:274px;top:470px;width:318px;height:1px;background:#a0a0a0;"></div>
<div class="r" style="left:274px;top:499px;width:318px;height:1px;background:#a0a0a0;"></div>
<div class="r" style="left:274px;top:528px;width:318px;height:1px;background:#a0a0a0;"></div>
<div class="r" style="left:274px;top:579px;width:318px;height:1px;background:#a0a0a0;"></div>
<div class="r" style="left:274px;top:652px;width:318px;height:1px;background:#a0a0a0;"></div>
<svg class="r" style="left:275px;top:311px" width="13" height="11" viewBox="0 0 13 11"><rect x="0" y="0" width="13" height="11" fill="#000"/><path d="M1.5 1.5 H5.6 V3.2 L4 9.5 H2.4 L4 3.2 H1.5 Z" fill="#fff"/><rect x="7" y="1" width="5" height="8.8" fill="#fff"/><path d="M8 3.2 H10.8 V4.2 L8.6 7.3 H11 V8.3 H7.9 V7.3 L10 4.2 H8 Z" fill="#000"/></svg>
<svg class="r" style="left:274px;top:331px" width="16" height="16" viewBox="0 0 16 16"><rect x="0" y="0" width="16" height="16" fill="#1479d4"/><path d="M3 2 Q5.5 2.5 8 1.2 Q10.5 2.5 13 2 V9 Q12 12.5 8 15 Q4 12.5 3 9 Z" fill="#fff"/><path d="M7.6 1.5 V15 M3 7.7 H13" stroke="#1479d4" stroke-width="1.2"/></svg>
<svg class="r" style="left:274px;top:426px" width="16" height="14" viewBox="0 0 16 14"><path d="M2.5 13.5 Q0 10 0.3 5 Q0.5 1 3.5 1 Q5.5 1.5 7.5 5 Q9.5 1.5 11.5 1 Q14.7 1 14.7 5 Q15 10 12 13.5 L10.5 13 Q11 10 10.3 8.5 L7.5 10.5 L4.7 8.5 Q4 10 4.5 13 Z" fill="#2568b4"/></svg>
<svg class="r" style="left:273px;top:475px" width="18" height="19" viewBox="0 0 18 19"><path d="M9.5 10 L16.3 16.8" stroke="#1a1a1a" stroke-width="1.7"/><path d="M11 11.2 L14.2 14.4" stroke="#7ab0e0" stroke-width="0.7"/><path d="M7.6 1.5 L8.2 5 L11.2 6.6 L8 7.8 L7.2 11 L5.4 8.4 L1.5 8.8 L3.6 6 L2 3 L5.2 4.2 Z" fill="#fbe44a" stroke="#a8381a" stroke-width="1"/><circle cx="6.2" cy="6.2" r="1.6" fill="#f8f870"/></svg>
<svg class="r" style="left:406px;top:588px" width="14" height="21" viewBox="0 0 14 21"><path d="M1.5 1 V17.5 L5.5 13.5 L8.6 19.8 L11 18.8 L8 12.5 H13.2 Z" fill="#fff" stroke="#000" stroke-width="1" stroke-linejoin="round"/></svg>
<svg class="r" style="left:0;top:0" width="924" height="706" viewBox="0 0 924 706"><defs>
<linearGradient id="wr" gradientUnits="userSpaceOnUse" x1="0" y1="672" x2="0" y2="702"><stop offset="0" stop-color="#e80a0a"/><stop offset="0.55" stop-color="#d80808"/><stop offset="1" stop-color="#e84040"/></linearGradient>
<linearGradient id="wg" gradientUnits="userSpaceOnUse" x1="0" y1="672" x2="0" y2="702"><stop offset="0" stop-color="#48484c"/><stop offset="0.55" stop-color="#505054"/><stop offset="1" stop-color="#7a7a7e"/></linearGradient>
</defs>
<g font-family="Liberation Sans" font-weight="bold" font-style="italic" font-size="42">
<path d="M4.5 673 H36.5 L34.3 680.5 H26 L19.6 702 H3 L9.4 680.5 H2.3 Z" fill="#000" stroke="#000" stroke-width="6.5" stroke-linejoin="round"/><g transform="translate(0,702) skewX(-6) translate(0,-702)"><text x="28" y="702" textLength="90" lengthAdjust="spacingAndGlyphs" fill="#000" stroke="#000" stroke-width="6.5" stroke-linejoin="round">urbo</text><text x="118" y="702" textLength="107" lengthAdjust="spacingAndGlyphs" fill="#000" stroke="#000" stroke-width="6.5" stroke-linejoin="round">Lab.it</text></g><path d="M4.5 673 H36.5 L34.3 680.5 H26 L19.6 702 H3 L9.4 680.5 H2.3 Z" fill="#dcd4d4" stroke="#dcd4d4" stroke-width="4.3" stroke-linejoin="round"/><g transform="translate(0,702) skewX(-6) translate(0,-702)"><text x="28" y="702" textLength="90" lengthAdjust="spacingAndGlyphs" fill="#dcd4d4" stroke="#dcd4d4" stroke-width="4.3" stroke-linejoin="round">urbo</text><text x="118" y="702" textLength="107" lengthAdjust="spacingAndGlyphs" fill="#d4d4d8" stroke="#d4d4d8" stroke-width="4.3" stroke-linejoin="round">Lab.it</text></g><path d="M4.5 673 H36.5 L34.3 680.5 H26 L19.6 702 H3 L9.4 680.5 H2.3 Z" fill="url(#wr)" stroke="url(#wr)" stroke-width="2.3" stroke-linejoin="round"/><g transform="translate(0,702) skewX(-6) translate(0,-702)"><text x="28" y="702" textLength="90" lengthAdjust="spacingAndGlyphs" fill="url(#wr)" stroke="url(#wr)" stroke-width="2.3" stroke-linejoin="round">urbo</text><text x="118" y="702" textLength="107" lengthAdjust="spacingAndGlyphs" fill="url(#wg)" stroke="url(#wg)" stroke-width="2.3" stroke-linejoin="round">Lab.it</text></g>
</g>
<path d="M8.2 673.5 L0 701.5 M11.2 673.5 L3 701.5 M14.2 673.5 L6 701.5" stroke="#f4c8c8" stroke-width="0.8" fill="none" clip-path="url(#tclip)"/>
<clipPath id="tclip"><path d="M4.5 673 H36.5 L34.3 680.5 H26 L19.6 702 H3 L9.4 680.5 H2.3 Z"/></clipPath>
</svg>
</body></html>
